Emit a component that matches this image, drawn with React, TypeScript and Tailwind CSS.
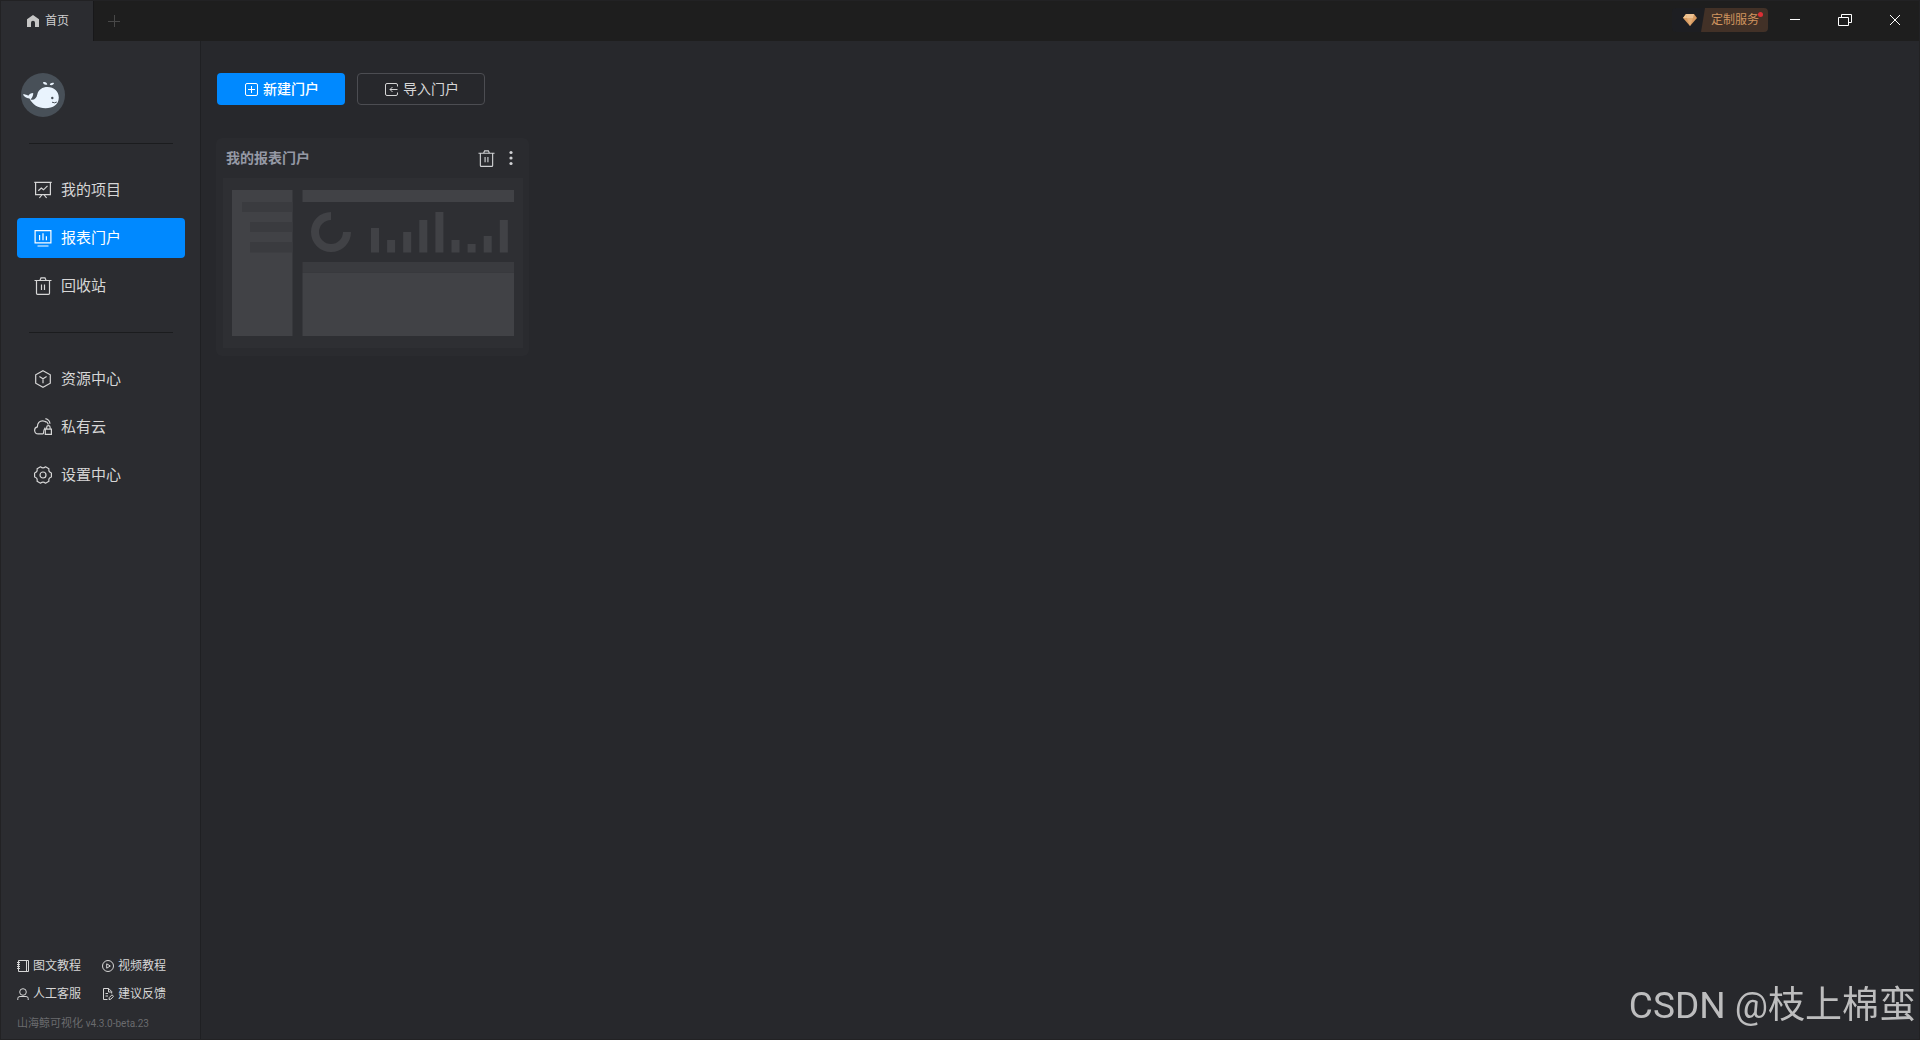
import type { ReactNode } from "react";

function Icon({ size = "size-[18px]", box = "0 0 18 18", stroke = 1.2, children }: { size?: string; box?: string; stroke?: number; children: ReactNode }) {
  return (
    <svg className={`${size} shrink-0`} viewBox={box} fill="none" stroke="currentColor" strokeWidth={stroke} aria-hidden="true">
      {children}
    </svg>
  );
}

const trash = <path d="M.5 3.5h17M6 3.2 7 .9h4l1 2.3M2.5 3.5v12.8q0 1 1 1h11q1 0 1-1V3.5M7.5 7.5v5.5M10.5 7.5v5.5" />;

const mainNav = [
  {
    label: "我的项目",
    icon: <path d="M.3 1.4h17.4M1.6 1.4v12.2h14.8V1.4M4.3 9.8l3-2.8 2.2 1.8 4-4M7.8 14 5.4 17M10.2 14l2.4 3" />,
  },
  {
    label: "报表门户",
    icon: <path d="M1.1 1.6h15.8v12.2H1.1zM3.5 17h11M5.6 6v5.2M9 4.2v7M12.4 7.2v4" />,
    active: true,
  },
  { label: "回收站", icon: trash },
];

const serviceNav = [
  {
    label: "资源中心",
    icon: <path d="M9 .7 16.3 4.8v8.4L9 17.3 1.7 13.2V4.8zM5.4 6.6 9 8.8l3.6-2.2M9 8.8v4.4" />,
  },
  {
    label: "私有云",
    icon: (
      <>
        <path d="M9.3 15.9H4.2A3.6 3.6 0 0 1 3.4 8.8C3.4 5 5.5 2.8 8.6 2.8c1.4 0 2.6.5 3.5 1.4M9.3 15.9q0-3.5 2-6.2M11.4.7c2.7.6 4.3 2.5 4.6 5M11.2 3.3c1.9.6 2.7 1.7 3.2 3.2" />
        <path d="M11.3 11.2h6.1v5.2h-6.1zM12.7 11V9.3a1.7 1.7 0 0 1 3.4 0V11" />
      </>
    ),
  },
  {
    label: "设置中心",
    icon: (
      <>
        <path strokeLinejoin="round" d="M6.5.8Q9 3 11.5.8L14.9 2.7Q14.2 6 17.4 7V11Q14.2 12 14.9 15.3L11.5 17.2Q9 15 6.5 17.2L3.1 15.3Q3.8 12 .6 11V7Q3.8 6 3.1 2.7z" />
        <circle cx="9" cy="9" r="3" />
      </>
    ),
  },
];

const helpLinks = [
  { label: "图文教程", icon: <path d="M1.5.5h10v11h-10zM9.5.5v11M0 2.5h3M0 4.5h3M0 6.5h3M0 8.5h3" /> },
  {
    label: "视频教程",
    icon: (
      <>
        <circle cx="6" cy="6" r="5.5" />
        <path d="M4.7 3.8v4.4L8.3 6z" />
      </>
    ),
  },
  {
    label: "人工客服",
    icon: (
      <>
        <circle cx="6" cy="4" r="3.3" />
        <path d="M.8 12V10.4Q.8 8.5 3 8.5h6q2.2 0 2.2 1.9V12" />
      </>
    ),
  },
  {
    label: "建议反馈",
    icon: <path d="M5.5 11.5h-4V.5h5.2l3 3v2M6.5.5V4h3.2M3.5 5.5H6M3.5 8H6M7 11.5l.3-2L10 6.8l1.5 1.5-2.7 2.9z" />,
  },
];

const barTops = [50, 62, 54, 42, 34, 62, 66, 58, 42];

function TitleBar() {
  return (
    <header className="flex h-10 items-start justify-between bg-[#1e1e1e]">
      <div className="flex h-full">
        <button className="flex w-[93px] items-center gap-1.5 border-r border-[#18181a] bg-[#2b2c30] pl-[26px] text-xs text-[#d0d0d0]" type="button">
          <svg className="size-3" viewBox="0 0 12 12" fill="#c6c6c6" aria-hidden="true">
            <path d="M6 0 12 4.2V12H8V7.8a2 2 0 0 0-4 0V12H0V4.2z" />
          </svg>
          首页
        </button>
        <button className="grid w-10 place-items-center text-[#484848]" type="button" aria-label="新建">
          <svg className="size-3" viewBox="0 0 12 12" stroke="currentColor" aria-hidden="true">
            <path d="M0 6.5h12M6.5 0v12" />
          </svg>
        </button>
      </div>
      <div className="-mr-px flex h-[38px] items-center">
        <button className="relative mr-0.5 flex h-6 w-24 items-center overflow-hidden rounded-sm bg-[#1d1e22] text-xs text-[#d0945f]" type="button">
          <svg className="ml-[11px] h-3 w-3.5 shrink-0" viewBox="0 0 14 12" aria-hidden="true">
            <path d="M3 0h8l3 4-7 8-7-8z" fill="#d79a60" />
            <path d="M3 0h8l-1 4H4z" fill="#edc292" />
            <path d="M4 4h6l-3 8z" fill="#e2ac74" />
            <path d="M0 4 3 0l1 4z" fill="#f0c48e" />
          </svg>
          <span className="ml-1 flex h-6 flex-1 items-center bg-[#423127] pl-2.5 [clip-path:polygon(4px_0,100%_0,100%_100%,0_100%)]">定制服务</span>
          <span className="absolute top-1 right-[5px] size-[5px] rounded-full bg-[#dc2f35]" />
        </button>
        <button className="grid h-full w-[50px] place-items-center text-white" type="button" aria-label="最小化">
          <svg className="size-3.5" viewBox="0 0 14 14" stroke="currentColor" aria-hidden="true"><path d="M2 6.5h10" /></svg>
        </button>
        <button className="grid h-full w-[50px] place-items-center text-white" type="button" aria-label="还原">
          <svg className="size-3.5" viewBox="0 0 14 14" fill="none" stroke="currentColor" aria-hidden="true"><path d="M.5 4.5h10v8H.5zM3.5 4.5v-3h10v8h-3" /></svg>
        </button>
        <button className="grid h-full w-[50px] place-items-center text-white" type="button" aria-label="关闭">
          <svg className="size-2.5" viewBox="0 0 10 10" stroke="currentColor" aria-hidden="true"><path d="m0 0 10 10M10 0 0 10" /></svg>
        </button>
      </div>
    </header>
  );
}

function Whale() {
  return (
    <svg className="ml-5 size-11" viewBox="0 0 44 44" role="img" aria-label="头像">
      <circle cx="22" cy="22" r="22" fill="#485058" />
      <path d="M9.5 26.5C13 27.5 15.5 25.5 16.3 21.5 17.3 16.5 21.5 14 26.5 14 33 14 37.8 18.5 37.8 24.5 37.8 31.5 32 35.3 24.5 35.3 17 35.3 11.5 31.5 8.5 25.5 5 25 2.5 23.5 2 21.2 4 21.3 6 21.6 7.2 22.8 8.2 21 10 20.2 12.2 20 12.3 22.5 11.5 24.3 9.5 26.5z" fill="#e9f3fd" />
      <path d="M22 9.3c2-.8 4 0 4.3 2.3-2.5.6-4.2-.2-4.3-2.3zM33 10c-2-.6-4 .2-4.2 2 2.2.5 3.9-.2 4.2-2z" fill="#e9f3fd" />
      <circle cx="31.3" cy="25" r="1.2" fill="#485058" />
      <path d="M31 29.2q2.7 1.3 4.8-.2" fill="none" stroke="#485058" />
    </svg>
  );
}

function NavList({ items }: { items: { label: string; icon: ReactNode; active?: boolean }[] }) {
  return (
    <nav className="flex flex-col gap-2 pr-[15px] pl-4">
      {items.map((item) => (
        <a
          key={item.label}
          href="#"
          className={`flex h-10 items-center gap-[9px] rounded pl-[17px] text-[15px] ${item.active ? "bg-[#0089ff] text-white" : "text-[#d6d6d6]"}`}
        >
          <Icon>{item.icon}</Icon>
          {item.label}
        </a>
      ))}
    </nav>
  );
}

function Sidebar() {
  return (
    <aside className="flex w-[200px] shrink-0 flex-col border-r border-[#1f2023] bg-[#2b2c30] pt-8">
      <Whale />
      <hr className="my-[26px] mr-[27px] ml-7 border-[#1b1c1e]" />
      <NavList items={mainNav} />
      <hr className="my-[26px] mr-[27px] ml-7 border-[#1b1c1e]" />
      <NavList items={serviceNav} />
      <footer className="mt-auto px-4 pb-[5px] text-xs text-[#d6d6d6]">
        <div className="grid grid-cols-[85px_1fr] gap-y-3">
          {helpLinks.map((link) => (
            <a key={link.label} href="#" className="flex items-center gap-1 leading-4">
              <Icon size="size-3" box="0 0 12 12" stroke={1}>{link.icon}</Icon>
              {link.label}
            </a>
          ))}
        </div>
        <p className="mt-3 text-[11px] leading-5 text-[#6a6b6e]">山海鲸可视化 <span className="text-[10px]">v4.3.0-beta.23</span></p>
      </footer>
    </aside>
  );
}

function PortalThumbnail() {
  return (
    <svg className="block w-full bg-[#2e2f33]" viewBox="0 0 300 170" aria-hidden="true">
      <g fill="#414246">
        <path d="M9 12h60.5v146H9zM79.5 12H291v12H79.5zM79.5 94.5H291V158H79.5z" />
        <path d="M108 34a20 20 0 1 0 20 20h-8a12 12 0 1 1-12-12z" />
        {barTops.map((top, i) => (
          <rect key={i} x={148 + i * 16.1} y={top} width="8" height={74.5 - top} />
        ))}
      </g>
      <path d="M19 24h50.5v10H19zM27 44h42.5v10H27zM27 64h42.5v10.5H27zM79.5 84H291v10.5H79.5z" fill="#3a3b3f" />
    </svg>
  );
}

function PortalCard() {
  return (
    <article className="w-[313px] rounded-md bg-[#2a2b2f] pr-1.5 pb-2 pl-[7px]">
      <div className="flex h-10 items-center justify-between pr-1 pl-[3px]">
        <h2 className="text-sm font-bold text-[#9599a5]">我的报表门户</h2>
        <div className="flex items-center gap-2 text-[#d0d1d4]">
          <button type="button" aria-label="删除"><Icon size="size-[17px]">{trash}</Icon></button>
          <button className="grid w-4 place-items-center" type="button" aria-label="更多">
            <svg className="h-4 w-1" viewBox="0 0 4 16" fill="currentColor" aria-hidden="true">
              <circle cx="2" cy="2.5" r="1.6" />
              <circle cx="2" cy="8" r="1.6" />
              <circle cx="2" cy="13.5" r="1.6" />
            </svg>
          </button>
        </div>
      </div>
      <PortalThumbnail />
    </article>
  );
}

export default function App() {
  return (
    <div className="flex min-h-screen flex-col border border-[#222224] bg-[#27282c] font-[Roboto,'Noto_Sans_CJK_SC',sans-serif]">
      <TitleBar />
      <div className="flex flex-1">
        <Sidebar />
        <main className="flex-1 pt-8 pl-[15px]">
          <div className="ml-px flex gap-3">
            <button className="flex h-8 w-32 items-center justify-center gap-[5px] rounded bg-[#0089ff] pl-0.5 text-sm font-medium text-white" type="button">
              <Icon size="size-[13px]" box="0 0 13 13" stroke={1}><path d="M2 .5h9q1.5 0 1.5 1.5v9q0 1.5-1.5 1.5H2Q.5 12.5.5 11V2Q.5.5 2 .5zM6.5 3v7M3 6.5h7" /></Icon>
              新建门户
            </button>
            <button className="flex h-8 w-32 items-center justify-center gap-[5px] rounded border border-[#4c4d52] pl-0.5 text-sm text-[#d6d6d6]" type="button">
              <Icon size="size-[13px]" box="0 0 13 13" stroke={1}><path d="M12.5 3.5V2q0-1.5-1.5-1.5H2Q.5.5.5 2v9q0 1.5 1.5 1.5h9q1.5 0 1.5-1.5V9.5M12.5 6.5H5M7.5 4 5 6.5 7.5 9" /></Icon>
              导入门户
            </button>
          </div>
          <section className="mt-[33px]">
            <PortalCard />
          </section>
        </main>
      </div>
      <p className="pointer-events-none fixed right-1 bottom-[7px] text-[37px] leading-[54px] text-[#bdbdbe]">CSDN @枝上棉蛮</p>
    </div>
  );
}
